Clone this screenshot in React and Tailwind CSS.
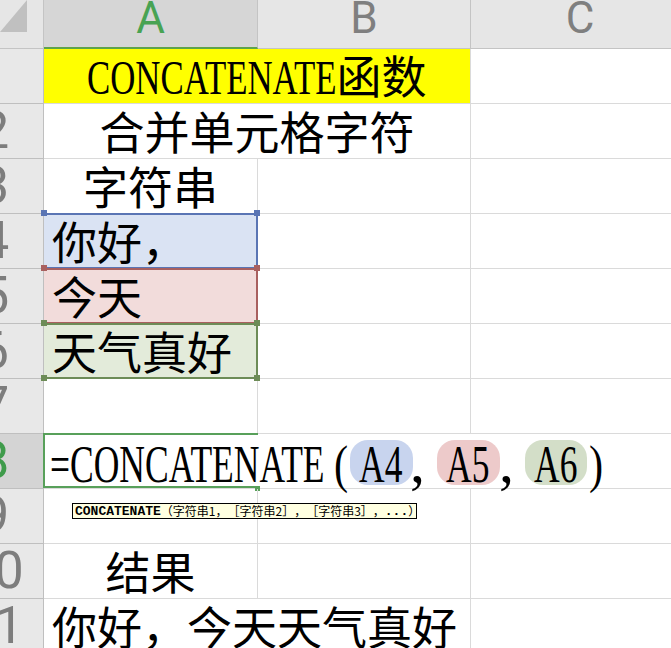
import React from 'react';

const CJK = "font-['Noto_Sans_CJK_SC',sans-serif]";
const SERIF = "font-['Liberation_Serif','Noto_Sans_CJK_SC',serif]";
const CJK_CELL = "font-['Noto_Sans_CJK_SC',sans-serif] text-[45px] leading-[54px] whitespace-nowrap";

function RowHead({ n, active = false }) {
  return (
    <div
      className={`w-[44px] shrink-0 flex items-center justify-center overflow-hidden border-r border-b border-[#bfbfbf] font-['Roboto',sans-serif] text-[52px] leading-none ${
        active ? 'bg-[#d4d4d4] text-[#3f9b4b]' : 'bg-[#e8e8e8] text-[#7d7d7d]'
      }`}
    >
      <span className="shrink-0 w-[80px] text-center -translate-x-[27px]">{n}</span>
    </div>
  );
}

function Row({ n, active, children }) {
  return (
    <div className="flex h-[55px] shrink-0">
      <RowHead n={n} active={active} />
      {children}
    </div>
  );
}

function Cell({ className = '', right = true, children }) {
  return (
    <div className={`shrink-0 border-b border-[#dadada] ${right ? 'border-r' : ''} ${className}`}>
      {children}
    </div>
  );
}

// Latin text in the narrow (half-width) serif look of the sheet font
function Narrow({ box = '', scale, children }) {
  return (
    <span className={`inline-block whitespace-nowrap ${box}`}>
      <span className={`inline-block origin-left ${scale}`}>{children}</span>
    </span>
  );
}

function Pill({ className = '', children }) {
  return (
    <span className={`inline-block rounded-[18px] pt-[3px] pl-[9px] leading-[42px] whitespace-nowrap ${className}`}>
      <span className="inline-block origin-left scale-x-[0.67]">{children}</span>
    </span>
  );
}

function RangeBox({ border, handle }) {
  return (
    <>
      <div className={`absolute -top-px -left-px -right-px -bottom-px border-t-2 border-r-2 border-b-2 ${border}`} />
      <div className={`absolute -top-[4px] -left-[3px] w-[6px] h-[6px] ${handle}`} />
      <div className={`absolute -top-[4px] -right-[3px] w-[6px] h-[6px] ${handle}`} />
      <div className={`absolute -bottom-[3px] -left-[3px] w-[6px] h-[6px] ${handle}`} />
      <div className={`absolute -bottom-[3px] -right-[3px] w-[6px] h-[6px] ${handle}`} />
    </>
  );
}

const App = () => {
  return (
    <div className="w-[671px] h-[648px] overflow-hidden bg-white text-black [text-spacing-trim:space-all]">
      {/* column headers */}
      <div className="flex h-[49px]">
        <div className="w-[44px] shrink-0 relative bg-[#e6e6e6] border-r border-b border-[#c4c4c4]">
          <svg className="absolute left-0 top-0" width="28" height="33" viewBox="0 0 28 33">
            <polygon points="27,0 27,32 0,32" fill="#c0c0c0" />
          </svg>
        </div>
        <div className="w-[214px] shrink-0 flex justify-center bg-[#d6d6d6] border-r border-[#c4c4c4] border-b-2 border-b-[#5ea34b] font-['Roboto',sans-serif] text-[44px] leading-none text-[#48a353]">
          <span className="-mt-[4px]">A</span>
        </div>
        <div className="w-[213px] shrink-0 flex justify-center bg-[#e6e6e6] border-r border-b border-[#c4c4c4] font-['Roboto',sans-serif] text-[44px] leading-none text-[#7f7f7f]">
          <span className="-mt-[4px]">B</span>
        </div>
        <div className="w-[219px] shrink-0 flex justify-center bg-[#e6e6e6] border-r border-b border-[#c4c4c4] font-['Roboto',sans-serif] text-[44px] leading-none text-[#7f7f7f]">
          <span className="-mt-[4px]">C</span>
        </div>
      </div>

      <Row n="1">
        <Cell className="w-[427px] bg-[#ffff00] flex justify-center pt-[6px]">
          <div className="flex items-baseline w-max">
            <Narrow box={`w-[249px] ${SERIF} text-[48px] leading-[40px]`} scale="scale-x-[0.725]">
              CONCATENATE
            </Narrow>
            <span className={`${CJK} text-[45px] leading-[40px]`}>函数</span>
          </div>
        </Cell>
        <Cell className="w-[219px]" />
      </Row>

      <Row n="2">
        <Cell className={`w-[427px] text-center ${CJK_CELL}`}>合并单元格字符</Cell>
        <Cell className="w-[219px]" />
      </Row>

      <Row n="3">
        <Cell className={`w-[214px] text-center ${CJK_CELL}`}>字符串</Cell>
        <Cell className="w-[213px]" />
        <Cell className="w-[219px]" />
      </Row>

      <Row n="4">
        <Cell className={`w-[214px] relative bg-[#dae3f3] pl-[8px] ${CJK_CELL}`}>
          你好，
          <RangeBox border="border-[#5a75b4]" handle="bg-[#5a75b4]" />
        </Cell>
        <Cell className="w-[213px]" />
        <Cell className="w-[219px]" />
      </Row>

      <Row n="5">
        <Cell className={`w-[214px] relative bg-[#f2dcdb] pl-[8px] ${CJK_CELL}`}>
          今天
          <RangeBox border="border-[#a9605f]" handle="bg-[#a9605f]" />
        </Cell>
        <Cell className="w-[213px]" />
        <Cell className="w-[219px]" />
      </Row>

      <Row n="6">
        <Cell className={`w-[214px] relative bg-[#e3ebda] pl-[8px] ${CJK_CELL}`}>
          天气真好
          <RangeBox border="border-[#6d8c57]" handle="bg-[#6d8c57]" />
        </Cell>
        <Cell className="w-[213px]" />
        <Cell className="w-[219px]" />
      </Row>

      <Row n="7">
        <Cell className="w-[214px]" />
        <Cell className="w-[213px]" />
        <Cell className="w-[219px]" />
      </Row>

      <Row n="8" active>
        <Cell right={false} className="w-[214px] relative pl-[6px] pt-[6px]">
          <div className={`flex items-baseline w-max ${SERIF} text-[53px] leading-[42px]`}>
            <Narrow box="w-[272px]" scale="scale-x-[0.67]">=CONCATENATE</Narrow>
            <Narrow box="ml-[12px] w-[16px]" scale="scale-x-[0.8]">(</Narrow>
            <Pill className="w-[63px] bg-[#c8d4ee]">A4</Pill>
            <span className="-ml-[3px] text-[60px]">,</span>
            <Pill className="ml-[12px] w-[63px] bg-[#edcaca]">A5</Pill>
            <span className="-ml-[1px] text-[60px]">,</span>
            <Pill className="ml-[11px] w-[62px] bg-[#d3dec8]">A6</Pill>
            <Narrow box="ml-[2px] w-[16px]" scale="scale-x-[0.8]">)</Narrow>
          </div>
          <div className="absolute -top-px -left-px right-0 bottom-0 border-t-2 border-l-2 border-b-2 border-[#58a05a]" />
          <div className="absolute -bottom-[3px] -right-[2px] w-[5px] h-[5px] bg-[#58a05a]" />
        </Cell>
        <Cell right={false} className="w-[213px]" />
        <Cell className="w-[219px]" />
      </Row>

      <Row n="9">
        <Cell className="w-[214px] relative">
          <div className="absolute left-[28px] top-[14px] z-10 w-[345px] h-[16px] flex items-center pl-[2px] whitespace-nowrap bg-[#ffffe1] border border-black">
            <span className="font-['Liberation_Mono',monospace] font-bold text-[13px] leading-none">CONCATENATE</span>
            <span className={`${CJK} text-[12px] leading-none`}>（字符串1，［字符串2］，［字符串3］，</span>
            <span className="font-['Liberation_Mono',monospace] font-bold text-[13px] leading-none">...</span>
            <span className={`${CJK} text-[12px] leading-none`}>）</span>
          </div>
        </Cell>
        <Cell className="w-[213px]" />
        <Cell className="w-[219px]" />
      </Row>

      <Row n="10">
        <Cell className={`w-[214px] text-center ${CJK_CELL}`}>结果</Cell>
        <Cell className="w-[213px]" />
        <Cell className="w-[219px]" />
      </Row>

      <Row n="11">
        <Cell right={false} className={`w-[214px] pl-[8px] ${CJK_CELL}`}>你好，今天天气真好</Cell>
        <Cell className="w-[213px]" />
        <Cell className="w-[219px]" />
      </Row>
    </div>
  );
};

export default App;
